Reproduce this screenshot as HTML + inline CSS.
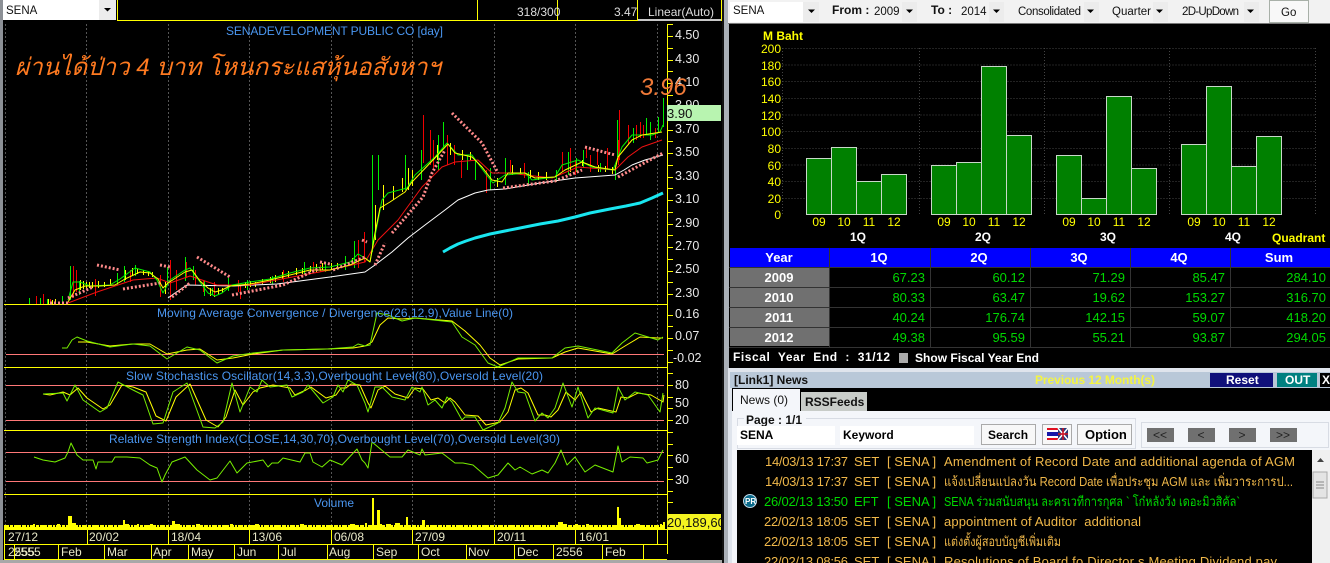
<!DOCTYPE html>
<html><head><meta charset="utf-8"><style>
html,body{margin:0;padding:0;background:#000;overflow:hidden}
svg{display:block}
text{font-family:"Liberation Sans","DejaVu Sans","Noto Sans CJK SC",sans-serif;white-space:pre}
.b{fill:#4a96f0;font-size:12px}
.ax{fill:#e8e8e8;font-size:12.5px}
.d{fill:#e8e8c8;font-size:12px}
.ty{fill:#ffff00;font-size:12px}
.h{fill:#fff;font-size:13px;font-weight:bold;text-anchor:middle}
.n{fill:#00d800;font-size:13px;text-anchor:end}
.nw{fill:#f0b84a;font-size:13px}
.ng{fill:#00d800;font-size:13px}
.tb{fill:#111;font-size:11.5px}
.bb{fill:#000;font-size:12px;font-weight:bold}
polyline{stroke-linejoin:round}
</style></head><body>
<svg width="1330" height="563" viewBox="0 0 1330 563" xmlns="http://www.w3.org/2000/svg">
<rect width="1330" height="563" fill="#000"/>
<!-- left gutter -->
<rect x="0" y="0" width="3" height="563" fill="#8c9096"/>
<rect x="0" y="560" width="722" height="3" fill="#a8a8a8"/>
<!-- top bar left -->
<rect x="3" y="0" width="113" height="20" fill="#fff"/>
<rect x="99" y="0" width="17" height="20" fill="#ececec"/>
<path d="M104 8h7l-3.500 3.500z" fill="#000"/>
<text x="6" y="14" class="tb" font-size="12">SENA</text>
<path d="M117.500 0V20.500H721.500V0M477.500 0V20.500M557.500 0V20.500M637.500 0V20.500" fill="none" stroke="#ffff00"/>
<rect x="638" y="19" width="83" height="2" fill="#c8c8c8"/>
<text x="517" y="16" style="font-size:12px;fill:#ddd">318/300</text>
<text x="614" y="16" style="font-size:12px;fill:#ddd">3.47</text>
<text x="648" y="16" style="font-size:12px;fill:#ddd">Linear(Auto)</text>
<!-- grid -->
<path d="M5.500 24V529M86.500 24V529M168.500 24V529M249.500 24V529M331.500 24V529M412.500 24V529M494.500 24V529M575.500 24V529M657.500 24V529" stroke="#555" stroke-dasharray="2 2" fill="none"/>
<!-- separators -->
<path d="M4 304.500H667M4 367.500H667M4 430.500H667M4 494.500H667" stroke="#ffff00" fill="none"/>
<path d="M6 354.500H664M6 385.500H664M6 420.500H664M6 452.500H664M6 481.500H664" stroke="#ff7878" fill="none"/>
<!-- price ticks -->
<g fill="none" stroke-width="1">
<path stroke="#ffff00" d="M48.500 299V304M52.500 300V304M55.500 299V304M80.500 280V290M83.500 281V289M86.500 282V288M89.500 282V288M92.500 282V288M98.500 281V288M104.500 282V287M110.500 279V285M125.500 270V280M132.500 268V276M137.500 269V274M143.500 270V275M148.500 271V276M152.500 272V277M160.500 278V284M165.500 282V294M210.500 288V296M214.500 290V297M218.500 288V295M222.500 288V293M228.500 284V290M245.500 282V288M250.500 281V287M255.500 282V287M262.500 279V284M270.500 277V283M275.500 275V282M282.500 272V279M288.500 271V278M296.500 268V275M302.500 268V274M310.500 266V272M316.500 264V272M322.500 263V270M331.500 263V270M337.500 263V269M345.500 260V267M352.500 258V264M375.500 205V240M383.500 185V210M393.500 186V200M402.500 178V192M408.500 168V190M412.500 170V186M430.500 148V165M437.500 145V160M450.500 143V155M462.500 150V160M470.500 152V160M490.500 175V187M497.500 178V187M505.500 165V178M512.500 165V175M520.500 168V175M530.500 170V178M538.500 172V180M546.500 172V180M556.500 172V180M570.500 165V172M582.500 160V166M590.500 163V170M598.500 165V172M605.500 166V172M612.500 167V174"/>
<path stroke="#00ee00" d="M29.500 298V304M40.500 298V304M47.500 299V304M62.500 296V304M70.500 266V300M79.500 281V295M117.500 273V285M124.500 266V282M135.500 265V276M167.500 267V285M176.500 272V288M185.500 257V281M193.500 266V280M204.500 281V296M212.500 288V295M228.500 278V291M247.500 280V290M272.500 276V284M304.500 262V275M325.500 262V272M345.500 256V270M354.500 241V268M372.500 155V252M378.500 155V190M405.500 155V190M421.500 150V180M443.500 122V147M438.500 135V170M467.500 155V170M475.500 160V180M490.500 168V190M505.500 158V185M528.500 172V185M556.500 170V182M568.500 152V175M576.500 158V172M583.500 150V168M600.500 163V172M615.500 165V180M617.500 120V157M633.500 128V143M646.500 118V135M650.500 122V140M658.500 117V132M663.500 98V127"/>
<path stroke="#f00000" d="M36.500 296V304M43.500 294V304M50.500 299V304M73.500 266V298M76.500 270V292M95.500 279V296M130.500 270V282M160.500 275V297M170.500 260V300M176.500 270V290M186.500 262V278M195.500 270V285M203.500 280V292M214.500 282V296M238.500 280V292M240.500 285V299M283.500 270V282M313.500 262V272M320.500 265V272M358.500 240V268M364.500 232V262M423.500 115V163M430.500 130V165M433.500 140V168M447.500 135V165M454.500 145V165M461.500 160V178M486.500 170V193M510.500 160V172M524.500 163V178M562.500 152V172M570.500 148V168M575.500 160V175M586.500 148V158M590.500 155V172M597.500 150V165M607.500 148V170M618.500 140V165M619.500 110V160M628.500 125V145M636.500 125V140M640.500 122V138M643.500 125V138M655.500 128V138"/>
</g>
<!-- moving averages -->
<polyline fill="none" stroke="#fff" stroke-width="1" points="168,298 175,293 187,285 233,286 277,284 330,277 365,272 375,265 392,252 408,238 425,225 445,210 458,200 475,193 488,190 505,189 540,183 575,178 615,175 624,170 632,165 645,160 663,155"/>
<polyline fill="none" stroke="#ee1111" stroke-width="1" points="68,303 97,292 133,280 157,278 170,283 190,276 217,285 250,285 287,278 330,270 365,262 378,240 398,220 422,187 442,167 455,162 478,160 492,173 508,173 552,178 578,167 615,170 628,157 642,147 662,140"/>
<polyline fill="none" stroke="#00ee00" stroke-width="1" points="68,300 73,282 80,282 90,286 110,285 120,279 135,268 150,272 157,280 163,293 170,280 185,270 190,268 200,282 208,293 215,296 222,293 232,285 250,282 270,279 290,273 310,268 330,267 350,262 358,254 365,258 370,262 382,200 388,193 407,188 415,175 435,157 447,143 458,155 472,155 485,173 493,183 505,175 525,173 532,180 555,177 562,165 578,160 592,167 613,170 622,147 632,135 652,135 660,132 663,125"/>
<polyline fill="none" stroke="#ffff00" stroke-width="1" points="68,302 75,290 85,286 100,286 115,285 125,279 140,272 150,273 158,279 163,288 168,283 185,272 192,270 200,281 208,288 215,292 222,290 230,286 250,284 270,280 290,275 310,270 330,270 350,265 365,258 370,262 375,233 380,208 390,202 405,192 412,182 433,160 448,144 455,153 472,157 482,167 492,180 502,182 508,173 525,173 535,178 555,177 565,170 582,162 595,167 615,170 618,157 632,140 642,135 662,132"/>
<!-- pink dots -->
<g fill="none" stroke="#ff8a8a" stroke-width="3" stroke-dasharray="2 2">
<path d="M50 303L68 303M68 298L93 287M97 265L120 270M123 289L160 283M160 265L170 267M172 297L190 283M197 257L230 277M232 295L283 285L320 268M320 262L330 264M333 270L365 257M362 240L367 242M375 265L385 243M392 233L423 197L432 173L445 150M452 113L482 143L498 173M503 188L555 181L582 170M585 147L615 155M618 177L663 153"/>
</g>
<!-- cyan -->
<polyline fill="none" stroke="#19e6f0" stroke-width="3" points="443,252 450,248 458,244 466,241 475,238 490,234 505,231 520,228 540,224 558,221 575,217 590,213 610,209 626,206 640,203 652,198 663,193"/>
<!-- MACD -->
<polyline fill="none" stroke="#ffff00" stroke-width="1" points="78,342 87,342 110,346 133,344 150,344 167,354 187,350 200,349 217,360 233,358 253,354 283,350 327,349 353,348 365,346 372,342 380,325 388,318 402,319 415,318 452,321 465,331 480,345 490,358 500,365 518,359 552,358 565,352 578,348 612,354 625,346 640,337 658,338 663,338"/>
<polyline fill="none" stroke="#77ee00" stroke-width="1" points="62,348 67,348 72,340 77,337 87,341 110,347 133,344 150,346 167,359 187,347 200,350 217,363 233,356 253,353 283,350 327,349 353,347 358,344 365,346 370,345 377,313 388,315 402,321 415,318 452,322 462,337 475,345 488,363 498,367 518,358 552,358 565,348 578,346 612,353 622,343 635,333 658,340 663,337"/>
<!-- Stoch -->
<polyline fill="none" stroke="#ffff00" stroke-width="1" points="43,394 50,395 63,392 70,395 78,388 87,398 103,409 110,405 122,385 133,387 146,392 156,416 166,421 176,397 190,384 206,420 218,427 226,417 235,390 243,405 253,392 260,388 273,385 290,388 295,395 306,390 311,387 326,398 336,395 341,388 346,388 351,384 360,385 368,403 371,408 378,390 385,386 395,394 408,398 415,388 423,389 431,400 438,398 445,403 450,398 455,402 465,415 478,416 486,425 500,422 508,412 515,390 521,388 528,393 538,415 545,415 551,417 558,410 566,392 575,400 581,392 591,412 598,408 616,412 621,397 628,398 638,393 651,395 663,402 664,395"/>
<polyline fill="none" stroke="#77ee00" stroke-width="1" points="43,394 63,393 67,401 75,385 83,400 100,412 107,408 118,382 133,390 143,395 153,424 163,423 173,392 187,383 203,427 215,428 223,422 232,383 240,412 250,387 257,392 262,380 270,387 287,385 292,397 303,392 308,385 323,403 333,397 338,385 343,392 348,380 357,385 365,403 368,412 375,387 382,387 392,397 405,400 412,387 420,392 422,387 428,405 435,400 442,408 447,397 452,402 462,420 465,417 475,417 483,430 498,423 505,408 512,382 518,392 525,393 535,421 542,413 548,418 555,408 563,383 572,407 578,387 588,418 595,408 613,413 618,387 625,400 635,392 648,395 660,412 663,393"/>
<!-- RSI -->
<polyline fill="none" stroke="#77ee00" stroke-width="1" points="34,457 43,460 55,462 65,458 68,452 71,443 77,455 83,460 93,460 96,469 98,462 112,462 115,457 127,457 140,458 150,465 157,468 162,482 165,475 172,462 185,457 197,470 210,480 217,478 230,461 237,473 247,463 263,460 268,467 272,463 278,463 283,458 300,462 305,453 310,453 313,462 322,467 330,460 342,465 357,449 362,460 365,463 368,468 372,442 378,447 390,457 402,457 408,450 420,455 422,449 425,455 442,453 455,463 463,463 473,465 488,478 498,475 508,463 515,470 520,467 532,474 542,470 548,473 555,463 561,450 567,465 575,457 585,472 595,465 613,472 618,446 622,462 630,457 643,458 647,463 658,460 663,450"/>
<!-- Volume -->
<rect x="4" y="527" width="661" height="2" fill="#ffff00"/>
<path d="M4 526H665" stroke="#ffff00" stroke-width="2" stroke-dasharray="5 1 3 1 7 1 4 1 2 1" fill="none"/>
<path fill="#ffff00" d="M33 524h2v3h-2zM57 524h3v3h-3zM68 516h4v11h-4zM72 523h4v4h-4zM123 520h2v7h-2zM125 524h4v3h-4zM137 524h2v3h-2zM150 524h3v3h-3zM172 521h3v6h-3zM175 524h5v3h-5zM196 524h4v3h-4zM230 524h3v3h-3zM255 524h4v3h-4zM300 524h4v3h-4zM350 524h5v3h-5zM365 523h2v4h-2zM372 498h2v29h-2zM377 510h3v17h-3zM380 524h2v3h-2zM386 524h5v3h-5zM406 517h2v10h-2zM422 520h3v7h-3zM395 523h5v4h-5zM558 522h5v5h-5zM563 524h4v3h-4zM575 524h3v3h-3zM586 524h3v3h-3zM617 507h2v20h-2zM619 518h2v9h-2zM636 524h4v3h-4zM660 524h2v3h-2zM663 522h2v5h-2z"/>
<!-- date frame -->
<path d="M4 529.500H667M4 544.500H667M4 559.500H667M4.500 529V560M87.500 529V544M168.500 529V544M249.500 529V544M331.500 529V544M412.500 529V544M494.500 529V544M575.500 529V544M657.500 529V544M14.500 544V560M58.500 544V560M104.500 544V560M151.500 544V560M188.500 544V560M234.500 544V560M278.500 544V560M327.500 544V560M373.500 544V560M418.500 544V560M466.500 544V560M514.500 544V560M553.500 544V560M602.500 544V560M643.500 544V560" stroke="#ffff00" fill="none"/>
<g class="d">
<text x="8" y="541" class="d">27/12</text><text x="89" y="541" class="d">20/02</text><text x="171" y="541" class="d">18/04</text><text x="252" y="541" class="d">13/06</text><text x="334" y="541" class="d">06/08</text><text x="415" y="541" class="d">27/09</text><text x="497" y="541" class="d">20/11</text><text x="579" y="541" class="d">16/01</text>
<text x="8" y="556" class="d">2555</text><text x="14" y="556" class="d">2555</text><text x="61" y="556" class="d">Feb</text><text x="107" y="556" class="d">Mar</text><text x="153" y="556" class="d">Apr</text><text x="191" y="556" class="d">May</text><text x="237" y="556" class="d">Jun</text><text x="281" y="556" class="d">Jul</text><text x="329" y="556" class="d">Aug</text><text x="376" y="556" class="d">Sep</text><text x="421" y="556" class="d">Oct</text><text x="468" y="556" class="d">Nov</text><text x="517" y="556" class="d">Dec</text><text x="556" y="556" class="d">2556</text><text x="605" y="556" class="d">Feb</text>
</g>
<!-- Axis -->
<path d="M667.500 24V554M667 24.500h6M667 36.500h6M667 48.500h6M667 60.500h6M667 71.500h6M667 83.500h6M667 95.500h6M667 130.500h6M667 141.500h6M667 153.500h6M667 165.500h6M667 177.500h6M667 188.500h6M667 200.500h6M667 212.500h6M667 224.500h6M667 235.500h6M667 247.500h6M667 259.500h6M667 271.500h6M667 282.500h6M667 294.500h6M667 315.500h6M667 326.500h6M667 338.500h6M667 350.500h6M667 362.500h6M667 373.500h6M667 385.500h6M667 397.500h6M667 408.500h6M667 420.500h6M667 432.500h6M667 444.500h6M667 455.500h6M667 467.500h6M667 479.500h6M667 491.500h6M667 502.500h6" stroke="#ffff00" fill="none"/>
<g>
<text x="675" y="39" class="ax">4.50</text><text x="675" y="63" class="ax">4.30</text><text x="675" y="86" class="ax">4.10</text><text x="675" y="109" class="ax">3.90</text><text x="675" y="133" class="ax">3.70</text><text x="675" y="156" class="ax">3.50</text><text x="675" y="180" class="ax">3.30</text><text x="675" y="203" class="ax">3.10</text><text x="675" y="227" class="ax">2.90</text><text x="675" y="250" class="ax">2.70</text><text x="675" y="273" class="ax">2.50</text><text x="675" y="297" class="ax">2.30</text><text x="675" y="318" class="ax">0.16</text><text x="675" y="340" class="ax">0.07</text><text x="673" y="362" class="ax">-0.02</text><text x="675" y="389" class="ax">80</text><text x="675" y="407" class="ax">50</text><text x="675" y="424" class="ax">20</text><text x="675" y="463" class="ax">60</text><text x="675" y="484" class="ax">30</text>
</g>
<rect x="667" y="105" width="54" height="16" fill="#b8f4b0"/>
<text x="667" y="118" style="font-size:13px;fill:#111">3.90</text>
<rect x="667" y="514" width="54" height="16" fill="#f4f420"/>
<text x="667" y="527" style="font-size:13px;fill:#111">20,189,60</text>
<!-- titles -->
<text x="226" y="35" class="b" textLength="217">SENADEVELOPMENT PUBLIC CO [day]</text>
<text x="157" y="317" class="b" textLength="356">Moving Average Convergence / Divergence(26,12,9),Value Line(0)</text>
<text x="126" y="380" class="b" textLength="417">Slow Stochastics Oscillator(14,3,3),Overbought Level(80),Oversold Level(20)</text>
<text x="109" y="443" class="b" textLength="451">Relative Strength Index(CLOSE,14,30,70),Overbought Level(70),Oversold Level(30)</text>
<text x="314" y="507" class="b">Volume</text>
<text x="15" y="75" font-size="24" font-style="italic" fill="#ff7a20" textLength="426" lengthAdjust="spacingAndGlyphs">ผ่านได้ป่าว 4 บาท โหนกระแสหุ้นอสังหาฯ</text>
<text x="640" y="95" font-size="24" font-style="italic" fill="#f07a38">3.96</text>
<!-- divider -->
<rect x="722" y="0" width="7" height="563" fill="#aab0b8"/>
<rect x="722" y="0" width="2" height="563" fill="#111"/>
<!-- right toolbar -->
<rect x="728" y="0" width="602" height="24" fill="#f2f2f2"/>
<rect x="728" y="23" width="602" height="1" fill="#777"/>
<rect x="730" y="2" width="73" height="20" fill="#fff"/>
<rect x="803" y="2" width="16" height="20" fill="#ececec"/><rect x="902" y="2" width="15" height="20" fill="#ececec"/><rect x="989" y="2" width="15" height="20" fill="#ececec"/><rect x="1084" y="2" width="15" height="20" fill="#ececec"/><rect x="1153" y="2" width="15" height="20" fill="#ececec"/><rect x="1244" y="2" width="15" height="20" fill="#ececec"/>
<path d="M808 9.500h7l-3.500 3.500zM906 9.500h7l-3.500 3.500zM993 9.500h7l-3.500 3.500zM1087 9.500h7l-3.500 3.500zM1156 9.500h7l-3.500 3.500zM1247 9.500h7l-3.500 3.500z" fill="#000"/>
<text x="733" y="14" class="tb">SENA</text>
<text x="832" y="14" style="font-size:12px;font-weight:bold;fill:#111">From :</text>
<text x="874" y="15" class="tb">2009</text>
<text x="931" y="14" style="font-size:12px;font-weight:bold;fill:#111">To :</text>
<text x="961" y="15" class="tb">2014</text>
<text x="1018" y="15" class="tb" textLength="63">Consolidated</text>
<text x="1112" y="15" class="tb">Quarter</text>
<text x="1182" y="15" class="tb" textLength="57">2D-UpDown</text>
<rect x="1269.500" y="0.500" width="39" height="22" fill="#f8f8f8" stroke="#a8b0a8"/>
<text x="1281" y="16" class="tb">Go</text>
<!-- bar chart -->
<path d="M782.500 48.500H1315M782.500 65H1315M782.500 81.500H1315M782.500 98.500H1315M782.500 115H1315M782.500 131.500H1315M782.500 148.500H1315M782.500 165H1315M782.500 181.500H1315M782.500 198.500H1315M782.500 48V215M919.500 48V215M1044.500 48V215M1169.500 48V215M1315.500 48V215" stroke="#444" stroke-dasharray="1 2" fill="none"/>
<g fill="#008000" stroke="#c8d8c8">
<rect x="806.500" y="158.500" width="25" height="56"/><rect x="831.500" y="147.500" width="25" height="67"/><rect x="856.500" y="181.500" width="25" height="33"/><rect x="881.500" y="174.500" width="25" height="40"/>
<rect x="931.500" y="165.500" width="25" height="49"/><rect x="956.500" y="162.500" width="25" height="52"/><rect x="981.500" y="66.500" width="25" height="148"/><rect x="1006.500" y="135.500" width="25" height="79"/>
<rect x="1056.500" y="155.500" width="25" height="59"/><rect x="1081.500" y="198.500" width="25" height="16"/><rect x="1106.500" y="96.500" width="25" height="118"/><rect x="1131.500" y="168.500" width="25" height="46"/>
<rect x="1181.500" y="144.500" width="25" height="70"/><rect x="1206.500" y="86.500" width="25" height="128"/><rect x="1231.500" y="166.500" width="25" height="48"/><rect x="1256.500" y="136.500" width="25" height="78"/>
</g>
<text x="763" y="40" style="font-size:12px;font-weight:bold;fill:#ffff00">M Baht</text>
<g text-anchor="end">
<text x="781" y="53" class="ty">200</text><text x="781" y="70" class="ty">180</text><text x="781" y="86" class="ty">160</text><text x="781" y="103" class="ty">140</text><text x="781" y="120" class="ty">120</text><text x="781" y="136" class="ty">100</text><text x="781" y="153" class="ty">80</text><text x="781" y="170" class="ty">60</text><text x="781" y="186" class="ty">40</text><text x="781" y="203" class="ty">20</text><text x="781" y="219" class="ty">0</text>
</g>
<g text-anchor="middle">
<text x="819" y="226" class="ty">09</text><text x="844" y="226" class="ty">10</text><text x="869" y="226" class="ty">11</text><text x="894" y="226" class="ty">12</text>
<text x="944" y="226" class="ty">09</text><text x="969" y="226" class="ty">10</text><text x="994" y="226" class="ty">11</text><text x="1019" y="226" class="ty">12</text>
<text x="1069" y="226" class="ty">09</text><text x="1094" y="226" class="ty">10</text><text x="1119" y="226" class="ty">11</text><text x="1144" y="226" class="ty">12</text>
<text x="1194" y="226" class="ty">09</text><text x="1219" y="226" class="ty">10</text><text x="1244" y="226" class="ty">11</text><text x="1269" y="226" class="ty">12</text>
</g>
<g style="font-size:12px;font-weight:bold;fill:#fff">
<text x="850" y="241">1Q</text><text x="975" y="241">2Q</text><text x="1100" y="241">3Q</text><text x="1225" y="241">4Q</text>
</g>
<text x="1272" y="242" style="font-size:12px;font-weight:bold;fill:#ffff00">Quadrant</text>
<!-- table -->
<rect x="730" y="248" width="600" height="19" fill="#0000ff"/>
<rect x="730" y="268" width="99" height="78" fill="#707070"/>
<path d="M729 267.500H1330M729 287.500H1330M729 307.500H1330M729 327.500H1330M729 347.500H1330M829.500 248V347M930.500 248V347M1030.500 248V347M1130.500 248V347M1230.500 248V347" stroke="#333" fill="none"/>
<text x="779" y="262" class="h">Year</text><text x="879" y="262" class="h">1Q</text><text x="979" y="262" class="h">2Q</text><text x="1079" y="262" class="h">3Q</text><text x="1179" y="262" class="h">4Q</text><text x="1279" y="262" class="h">Sum</text>
<text x="779" y="282" class="h">2009</text><text x="779" y="302" class="h">2010</text><text x="779" y="322" class="h">2011</text><text x="779" y="342" class="h">2012</text>
<text x="925" y="282" class="n">67.23</text><text x="1025" y="282" class="n">60.12</text><text x="1125" y="282" class="n">71.29</text><text x="1225" y="282" class="n">85.47</text><text x="1326" y="282" class="n">284.10</text>
<text x="925" y="302" class="n">80.33</text><text x="1025" y="302" class="n">63.47</text><text x="1125" y="302" class="n">19.62</text><text x="1225" y="302" class="n">153.27</text><text x="1326" y="302" class="n">316.70</text>
<text x="925" y="322" class="n">40.24</text><text x="1025" y="322" class="n">176.74</text><text x="1125" y="322" class="n">142.15</text><text x="1225" y="322" class="n">59.07</text><text x="1326" y="322" class="n">418.20</text>
<text x="925" y="342" class="n">49.38</text><text x="1025" y="342" class="n">95.59</text><text x="1125" y="342" class="n">55.21</text><text x="1225" y="342" class="n">93.87</text><text x="1326" y="342" class="n">294.05</text>
<text x="733" y="361" style="font-size:12px;font-weight:bold;fill:#fff" textLength="157">Fiscal  Year  End  :  31/12</text>
<rect x="899" y="353" width="9" height="10" fill="#aaa"/>
<text x="915" y="362" style="font-size:12px;font-weight:bold;fill:#fff" textLength="124">Show Fiscal Year End</text>
<!-- News panel -->
<rect x="728" y="368" width="602" height="195" fill="#dfe4ec"/>
<rect x="730" y="372" width="600" height="16" fill="#b9c8d8"/>
<text x="734" y="384" style="font-size:12px;font-weight:bold;fill:#111">[Link1] News</text>
<text x="1035" y="384" style="font-size:12px;font-weight:bold;fill:#f4f440" textLength="120">Previous 12 Month(s)</text>
<rect x="1210" y="373" width="63" height="14" fill="#10107a"/>
<text x="1226" y="384" style="font-size:12px;font-weight:bold;fill:#fff">Reset</text>
<rect x="1277" y="373" width="40" height="14" fill="#008080"/>
<text x="1285" y="384" style="font-size:12px;font-weight:bold;fill:#fff">OUT</text>
<rect x="1320" y="373" width="10" height="14" fill="#000"/>
<text x="1322" y="384" style="font-size:12px;font-weight:bold;fill:#fff">X</text>
<rect x="732" y="388" width="598" height="23" fill="#000"/>
<rect x="732" y="411" width="598" height="152" fill="#f4f6fa"/>
<rect x="733" y="389" width="67" height="23" fill="#f4f6fa"/>
<text x="740" y="404" style="font-size:12px;fill:#111">News (0)</text>
<rect x="801" y="392" width="66" height="19" fill="#c8ccc8"/>
<text x="805" y="406" style="font-size:12px;font-weight:bold;fill:#111">RSSFeeds</text>
<rect x="737.500" y="418.500" width="398" height="30" fill="none" stroke="#d8dce4"/>
<rect x="744" y="414" width="62" height="10" fill="#f4f6fa"/>
<text x="746" y="424" style="font-size:12px;font-weight:bold;fill:#111">Page : 1/1</text>
<rect x="737" y="426" width="98" height="19" fill="#fff"/>
<rect x="840" y="426" width="134" height="19" fill="#fff"/>
<text x="740" y="439" class="bb" fill="#111">SENA</text>
<text x="843" y="439" class="bb">Keyword</text>
<rect x="981.500" y="424.500" width="54" height="20" fill="#f8f8f8" stroke="#aaa"/>
<text x="988" y="439" class="bb">Search</text>
<rect x="1042.500" y="424.500" width="29" height="20" fill="#f8f8f8" stroke="#aaa"/>
<rect x="1047" y="428" width="11" height="12" fill="#fff"/>
<rect x="1047" y="428" width="11" height="2" fill="#e01020"/><rect x="1047" y="438" width="11" height="2" fill="#e01020"/><rect x="1047" y="432" width="11" height="4" fill="#1818a8"/>
<rect x="1058" y="428" width="10" height="12" fill="#283878"/>
<path d="M1058 428l10 12M1068 428l-10 12" stroke="#fff" stroke-width="1.500"/><path d="M1063 428v12M1058 434h10" stroke="#d01020" stroke-width="1.500"/>
<rect x="1077.500" y="424.500" width="54" height="20" fill="#f8f8f8" stroke="#aaa"/>
<text x="1085" y="439" class="bb" style="font-size:13px">Option</text>
<rect x="1141.500" y="422.500" width="187" height="25" fill="none" stroke="#d8dce4"/>
<g fill="#707070">
<rect x="1147" y="428" width="27" height="14"/><rect x="1188" y="428" width="27" height="14"/><rect x="1229" y="428" width="27" height="14"/><rect x="1270" y="428" width="27" height="14"/>
</g>
<g style="font-size:12px;fill:#222;text-anchor:middle">
<text x="1160" y="439">&lt;&lt;</text><text x="1201" y="439">&lt;</text><text x="1242" y="439">&gt;</text><text x="1283" y="439">&gt;&gt;</text>
</g>
<!-- News list -->
<rect x="737" y="450" width="575" height="113" fill="#000"/>
<rect x="1312" y="450" width="18" height="113" fill="#f0f0f0"/>
<path d="M1317 462h7l-3.500-4z" fill="#444"/>
<rect x="1313" y="472" width="14" height="26" fill="#e4e4e4" stroke="#aaa"/>
<path d="M1316 482h8M1316 485h8M1316 488h8" stroke="#888"/>
<g>
<text x="765" y="466" class="nw" textLength="83">14/03/13 17:37</text><text x="854" y="466" class="nw">SET</text><text x="887" y="466" class="nw">[ SENA ]</text><text x="944" y="466" class="nw" textLength="351">Amendment of Record Date and additional agenda of AGM</text>
<text x="765" y="486" class="nw" textLength="83">14/03/13 17:37</text><text x="854" y="486" class="nw">SET</text><text x="887" y="486" class="nw">[ SENA ]</text><text x="944" y="486" class="nw" textLength="349" lengthAdjust="spacingAndGlyphs">แจ้งเปลี่ยนแปลงวัน Record Date เพื่อประชุม AGM และ เพิ่มวาระการป...</text>
<circle cx="750" cy="501" r="6.500" fill="#0a6a8a" stroke="#bfd8e8"/><text x="745" y="504" style="font-size:8px;font-weight:bold;fill:#fff">PR</text>
<text x="764" y="506" class="ng" textLength="84">26/02/13 13:50</text><text x="854" y="506" class="ng">EFT</text><text x="887" y="506" class="ng">[ SENA ]</text><text x="944" y="506" class="ng" textLength="296" lengthAdjust="spacingAndGlyphs">SENA ร่วมสนับสนุน ละครเวทีการกุศล ` โก๋หลังวัง เดอะมิวสิคัล`</text>
<text x="764" y="526" class="nw" textLength="84">22/02/13 18:05</text><text x="854" y="526" class="nw">SET</text><text x="887" y="526" class="nw">[ SENA ]</text><text x="944" y="526" class="nw" textLength="197">appointment of Auditor  additional</text>
<text x="764" y="546" class="nw" textLength="84">22/02/13 18:05</text><text x="854" y="546" class="nw">SET</text><text x="887" y="546" class="nw">[ SENA ]</text><text x="944" y="546" class="nw" textLength="117" lengthAdjust="spacingAndGlyphs">แต่งตั้งผู้สอบบัญชีเพิ่มเติม</text>
<text x="764" y="566" class="nw" textLength="84">22/02/13 08:56</text><text x="854" y="566" class="nw">SET</text><text x="887" y="566" class="nw">[ SENA ]</text><text x="944" y="566" class="nw" textLength="333">Resolutions of Board fo Director s Meeting Dividend pay</text>
</g>
</svg>
</body></html>
